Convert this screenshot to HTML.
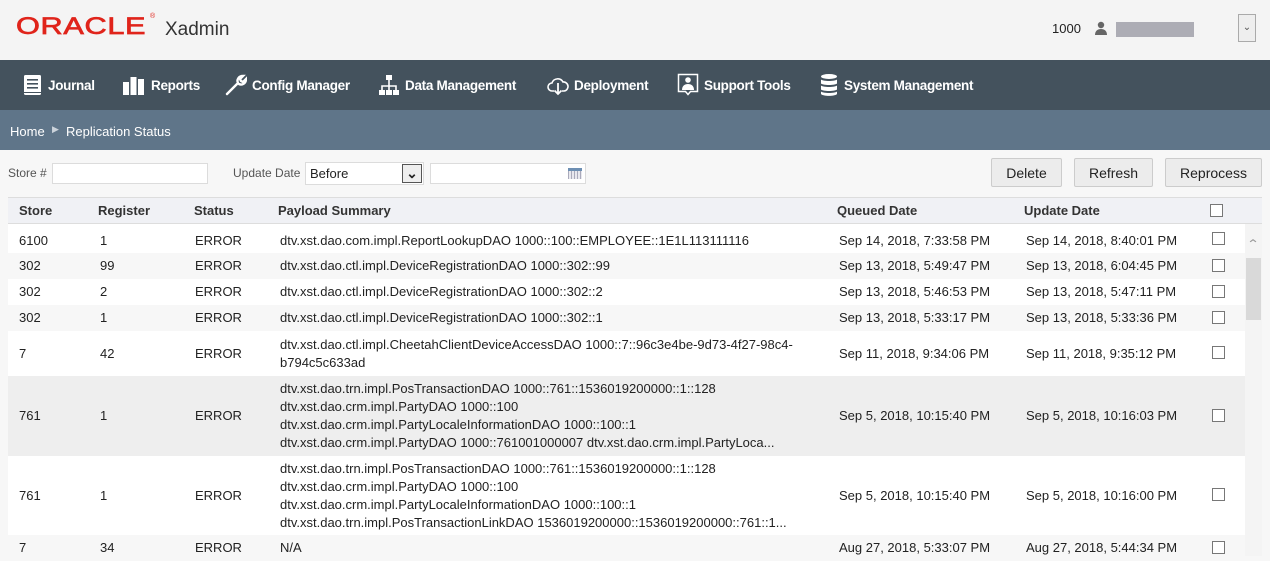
<!DOCTYPE html>
<html><head><meta charset="utf-8"><style>
*{margin:0;padding:0;box-sizing:border-box}
body{width:1270px;height:556px;overflow:hidden;background:#f7f7f7;font-family:"Liberation Sans",Arial,sans-serif;font-size:13px;color:#222;position:relative}
.a{position:absolute}
#hdr{left:0;top:0;width:1270px;height:60px;background:#f4f4f4}
#nav{left:0;top:60px;width:1270px;height:50px;background:#44525d;color:#fff;font-weight:bold;font-size:13.5px;letter-spacing:-0.3px}
#nav .i{position:absolute;top:0;height:50px;display:flex;align-items:center;gap:5px}
#bc{left:0;top:110px;width:1270px;height:40px;background:#5f7589;color:#fff;font-size:13px}
.inp{background:#fff;border:1px solid #dcdcdc;height:21px}
.btn{background:#ececec;border:1px solid #ccc;border-radius:2px;height:29px;top:158px;font-size:14px;display:flex;align-items:center;justify-content:center;color:#222}
#th{left:8px;top:197px;width:1254px;height:27px;background:#f0f1f5;border-top:1px solid #ddd;border-bottom:1px solid #ddd;font-weight:bold;font-size:13px;color:#333}
.row{position:absolute;left:8px;width:1237px}
.c{position:absolute;top:50%;transform:translateY(-50%);line-height:18px}
.cb{position:absolute;width:13px;height:13px;border:1px solid #777;background:#fff}
</style></head><body>
<div id="hdr" class="a">
 <div class="a" style="left:16px;top:13px;color:#e0241b;font-size:24px;font-weight:normal;-webkit-text-stroke:0.7px #e0241b;letter-spacing:0.5px;transform:scaleX(1.28);transform-origin:left;font-family:'Liberation Sans',sans-serif">ORACLE</div>
 <div class="a" style="left:150px;top:13px;color:#e0241b;font-size:7px">®</div>
 <div class="a" style="left:165px;top:19px;font-size:19px;color:#333">Xadmin</div>
 <div class="a" style="left:1052px;top:21px;font-size:13px;color:#222">1000</div>
 <svg class="a" style="left:1093px;top:20px" width="16" height="16" viewBox="0 0 16 16"><circle cx="8" cy="5" r="3.2" fill="#666"/><path d="M2 15c0-4 2.5-6 6-6s6 2 6 6z" fill="#666"/></svg>
 <div class="a" style="left:1116px;top:22px;width:78px;height:15px;background:#adadb5"></div>
 <div class="a" style="left:1238px;top:14px;width:18px;height:28px;border:1px solid #aaa;background:#eee;font-size:10px;color:#555;text-align:center;line-height:26px">&#8964;</div>
</div>
<div id="nav" class="a">
 <div class="i" style="left:23px"><svg width="20" height="22" viewBox="0 0 20 22"><rect x="1" y="1" width="17" height="20" rx="1.5" fill="#fff"/><rect x="4" y="5" width="11" height="1.6" fill="#44525d"/><rect x="4" y="9" width="11" height="1.6" fill="#44525d"/><rect x="4" y="13" width="11" height="1.6" fill="#44525d"/><rect x="1" y="18" width="17" height="1" fill="#44525d"/></svg>Journal</div>
 <div class="i" style="left:122px"><svg width="24" height="22" viewBox="0 0 24 22"><rect x="1" y="8" width="6" height="13" fill="#fff"/><rect x="8.5" y="3" width="6" height="18" fill="#fff"/><rect x="16" y="5" width="6" height="16" fill="#fff"/></svg>Reports</div>
 <div class="i" style="left:225px"><svg width="22" height="22" viewBox="0 0 22 22"><path d="M2 20l10-10M13 9c-1.5-3 .5-7 5-7l-3 3 1 2 2 1 3-3c0 4.5-4 6.5-7 5" stroke="#fff" stroke-width="2.4" fill="none" stroke-linecap="round"/></svg>Config Manager</div>
 <div class="i" style="left:378px"><svg width="22" height="22" viewBox="0 0 22 22"><rect x="8" y="1" width="6" height="5" fill="#fff"/><rect x="1" y="16" width="6" height="5" fill="#fff"/><rect x="8" y="16" width="6" height="5" fill="#fff"/><rect x="15" y="16" width="6" height="5" fill="#fff"/><path d="M11 6v10M4 16v-4h14v4" stroke="#fff" stroke-width="1.6" fill="none"/></svg>Data Management</div>
 <div class="i" style="left:547px"><svg width="22" height="22" viewBox="0 0 22 22"><path d="M7 17H5a4 4 0 010-8 6 6 0 0111-1 4.5 4.5 0 011 9h-2" stroke="#fff" stroke-width="1.6" fill="none"/><path d="M11 9v11M7.5 16.5L11 20l3.5-3.5" stroke="#fff" stroke-width="1.8" fill="none"/></svg>Deployment</div>
 <div class="i" style="left:677px"><svg width="22" height="24" viewBox="0 0 22 24"><path d="M1.5 1.5h19v17h-7l-2.5 3-2.5-3h-7z" stroke="#fff" stroke-width="1.5" fill="none"/><circle cx="11" cy="7" r="2.8" fill="#fff"/><path d="M5 17c0-4 2.5-6 6-6s6 2 6 6z" fill="#fff"/></svg>Support Tools</div>
 <div class="i" style="left:819px"><svg width="20" height="24" viewBox="0 0 20 24"><ellipse cx="10" cy="3.5" rx="8" ry="2.5" fill="#fff"/><path d="M2 6.5c2 2 14 2 16 0v4c-2 2-14 2-16 0zM2 12.5c2 2 14 2 16 0v4c-2 2-14 2-16 0zM2 18.5c2 2 14 2 16 0v2.5c-2 2.5-14 2.5-16 0z" fill="#fff"/></svg>System Management</div>
</div>
<div id="bc" class="a"><span class="a" style="left:10px;top:14px">Home</span><span class="a" style="left:52px;top:14px;font-size:9px;color:#cbd3db">&#9654;</span><span class="a" style="left:66px;top:14px">Replication Status</span></div>

<div class="a" style="left:8px;top:166px;color:#555;font-size:12px">Store #</div>
<div class="a inp" style="left:52px;top:163px;width:156px"></div>
<div class="a" style="left:233px;top:166px;color:#555;font-size:12px">Update Date</div>
<div class="a inp" style="left:305px;top:162px;width:119px;height:23px"><span class="a" style="left:4px;top:3px;font-size:13px">Before</span><div class="a" style="left:96px;top:1px;width:20px;height:19px;border:1px solid #555;background:#eee;font-size:14px;text-align:center;line-height:17px;font-weight:bold">&#8964;</div></div>
<div class="a inp" style="left:430px;top:163px;width:156px"><div class="a" style="left:137px;top:4px;width:14px;height:11px;background:repeating-linear-gradient(90deg,#aab 0 1px,#e8e8ee 1px 3px);border-top:3px solid #6d8fb3"></div></div>
<div class="a btn" style="left:991px;width:71px">Delete</div>
<div class="a btn" style="left:1074px;width:79px">Refresh</div>
<div class="a btn" style="left:1165px;width:97px">Reprocess</div>

<div id="th" class="a">
 <span class="a" style="left:11px;top:5px">Store</span><span class="a" style="left:90px;top:5px">Register</span><span class="a" style="left:186px;top:5px">Status</span><span class="a" style="left:270px;top:5px">Payload Summary</span><span class="a" style="left:829px;top:5px">Queued Date</span><span class="a" style="left:1016px;top:5px">Update Date</span>
 <div class="cb" style="left:1202px;top:6px"></div>
</div>

<div class="a" style="left:1245px;top:224px;width:17px;height:332px;background:#f4f4f4"></div>
<div class="a" style="left:1246px;top:258px;width:15px;height:62px;background:#d9d9d9"></div>
<div class="a" style="left:1248px;top:237px;font-size:12px;color:#999;transform:scaleX(1.3)">&#8963;</div>

<div class="row" style="top:224px;height:29px;background:#fff"><span class="c" style="left:11px;margin-top:2px">6100</span><span class="c" style="left:92px;margin-top:2px">1</span><span class="c" style="left:187px;margin-top:2px">ERROR</span><span class="c" style="left:272px;margin-top:2px">dtv.xst.dao.com.impl.ReportLookupDAO 1000::100::EMPLOYEE::1E1L113111116</span><span class="c" style="left:831px;margin-top:2px">Sep 14, 2018, 7:33:58 PM</span><span class="c" style="left:1018px;margin-top:2px">Sep 14, 2018, 8:40:01 PM</span><div class="cb" style="left:1204px;top:8px"></div></div>
<div class="row" style="top:253px;height:26px;background:#f7f7f7"><span class="c" style="left:11px">302</span><span class="c" style="left:92px">99</span><span class="c" style="left:187px">ERROR</span><span class="c" style="left:272px">dtv.xst.dao.ctl.impl.DeviceRegistrationDAO 1000::302::99</span><span class="c" style="left:831px">Sep 13, 2018, 5:49:47 PM</span><span class="c" style="left:1018px">Sep 13, 2018, 6:04:45 PM</span><div class="cb" style="left:1204px;top:6px"></div></div>
<div class="row" style="top:279px;height:26px;background:#fff"><span class="c" style="left:11px">302</span><span class="c" style="left:92px">2</span><span class="c" style="left:187px">ERROR</span><span class="c" style="left:272px">dtv.xst.dao.ctl.impl.DeviceRegistrationDAO 1000::302::2</span><span class="c" style="left:831px">Sep 13, 2018, 5:46:53 PM</span><span class="c" style="left:1018px">Sep 13, 2018, 5:47:11 PM</span><div class="cb" style="left:1204px;top:6px"></div></div>
<div class="row" style="top:305px;height:26px;background:#f7f7f7"><span class="c" style="left:11px">302</span><span class="c" style="left:92px">1</span><span class="c" style="left:187px">ERROR</span><span class="c" style="left:272px">dtv.xst.dao.ctl.impl.DeviceRegistrationDAO 1000::302::1</span><span class="c" style="left:831px">Sep 13, 2018, 5:33:17 PM</span><span class="c" style="left:1018px">Sep 13, 2018, 5:33:36 PM</span><div class="cb" style="left:1204px;top:6px"></div></div>
<div class="row" style="top:331px;height:45px;background:#fff"><span class="c" style="left:11px">7</span><span class="c" style="left:92px">42</span><span class="c" style="left:187px">ERROR</span><span class="c" style="left:272px">dtv.xst.dao.ctl.impl.CheetahClientDeviceAccessDAO 1000::7::96c3e4be-9d73-4f27-98c4-<br>b794c5c633ad</span><span class="c" style="left:831px">Sep 11, 2018, 9:34:06 PM</span><span class="c" style="left:1018px">Sep 11, 2018, 9:35:12 PM</span><div class="cb" style="left:1204px;top:15px"></div></div>
<div class="row" style="top:376px;height:80px;background:#eeeeee"><span class="c" style="left:11px">761</span><span class="c" style="left:92px">1</span><span class="c" style="left:187px">ERROR</span><span class="c" style="left:272px">dtv.xst.dao.trn.impl.PosTransactionDAO 1000::761::1536019200000::1::128<br>dtv.xst.dao.crm.impl.PartyDAO 1000::100<br>dtv.xst.dao.crm.impl.PartyLocaleInformationDAO 1000::100::1<br>dtv.xst.dao.crm.impl.PartyDAO 1000::761001000007 dtv.xst.dao.crm.impl.PartyLoca...</span><span class="c" style="left:831px">Sep 5, 2018, 10:15:40 PM</span><span class="c" style="left:1018px">Sep 5, 2018, 10:16:03 PM</span><div class="cb" style="left:1204px;top:33px"></div></div>
<div class="row" style="top:456px;height:79px;background:#fff"><span class="c" style="left:11px">761</span><span class="c" style="left:92px">1</span><span class="c" style="left:187px">ERROR</span><span class="c" style="left:272px">dtv.xst.dao.trn.impl.PosTransactionDAO 1000::761::1536019200000::1::128<br>dtv.xst.dao.crm.impl.PartyDAO 1000::100<br>dtv.xst.dao.crm.impl.PartyLocaleInformationDAO 1000::100::1<br>dtv.xst.dao.trn.impl.PosTransactionLinkDAO 1536019200000::1536019200000::761::1...</span><span class="c" style="left:831px">Sep 5, 2018, 10:15:40 PM</span><span class="c" style="left:1018px">Sep 5, 2018, 10:16:00 PM</span><div class="cb" style="left:1204px;top:32px"></div></div>
<div class="row" style="top:535px;height:26px;background:#f7f7f7"><span class="c" style="left:11px">7</span><span class="c" style="left:92px">34</span><span class="c" style="left:187px">ERROR</span><span class="c" style="left:272px">N/A</span><span class="c" style="left:831px">Aug 27, 2018, 5:33:07 PM</span><span class="c" style="left:1018px">Aug 27, 2018, 5:44:34 PM</span><div class="cb" style="left:1204px;top:6px"></div></div>
</body></html>
